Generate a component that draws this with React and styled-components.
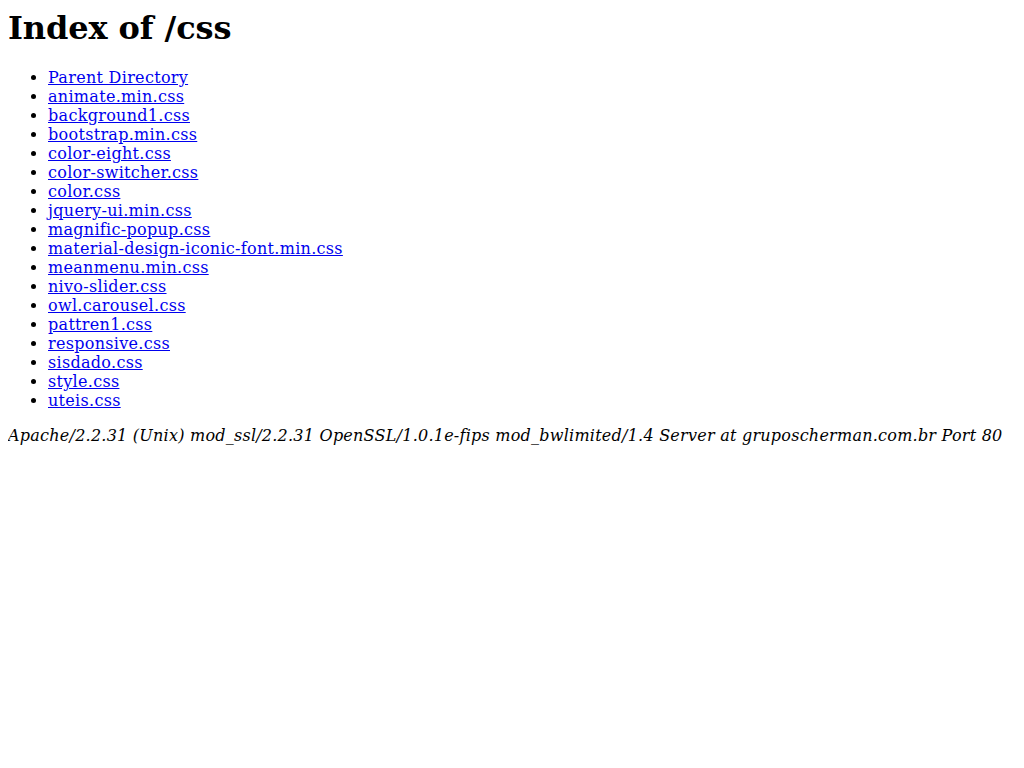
import React from "react";
import styled, { createGlobalStyle } from "styled-components";

const files = [
  "Parent Directory",
  "animate.min.css",
  "background1.css",
  "bootstrap.min.css",
  "color-eight.css",
  "color-switcher.css",
  "color.css",
  "jquery-ui.min.css",
  "magnific-popup.css",
  "material-design-iconic-font.min.css",
  "meanmenu.min.css",
  "nivo-slider.css",
  "owl.carousel.css",
  "pattren1.css",
  "responsive.css",
  "sisdado.css",
  "style.css",
  "uteis.css",
];

const GlobalStyle = createGlobalStyle`
  body {
    margin: 8px;
    background: #fff;
    color: #000;
    font-family: "DejaVu Serif", serif;
    font-size: 16px;
  }
`;

const Title = styled.h1`
  margin: 2px 0 21px;
  font-size: 32px;
  font-weight: bold;
  line-height: 37px;
  letter-spacing: -0.1px;
`;

const List = styled.ul`
  margin: 0 0 16px;
  padding-left: 40px;
  list-style: disc;
`;

const Item = styled.li`
  line-height: 19px;
`;

const FileLink = styled.a`
  color: #0000ee;
  text-decoration: underline;
  letter-spacing: 0.3px;
`;

const Address = styled.address`
  font-style: italic;
  line-height: 19px;
  letter-spacing: 0.24px;
  white-space: nowrap;
`;

const App = () => {
  return (
    <>
      <GlobalStyle />
      <Title>Index of /css</Title>
      <List>
        {files.map((name) => (
          <Item key={name}>
            <FileLink href="#">{name}</FileLink>
          </Item>
        ))}
      </List>
      <Address>
        Apache/2.2.31 (Unix) mod_ssl/2.2.31 OpenSSL/1.0.1e-fips mod_bwlimited/1.4
        Server at gruposcherman.com.br Port 80
      </Address>
    </>
  );
};

export default App;
